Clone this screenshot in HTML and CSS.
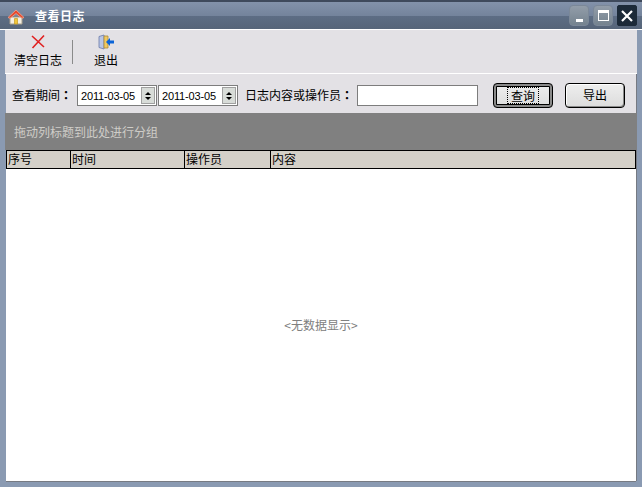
FILE: index.html
```html
<!DOCTYPE html>
<html lang="zh">
<head>
<meta charset="utf-8">
<title>查看日志</title>
<link rel="stylesheet" href="styles.css">
</head>
<body>
<div class="window">
  <header class="titlebar">
    <svg class="home" width="18" height="18" viewBox="0 0 18 18">
      <path d="M3 9v7h12V9z" fill="#f4efe2" stroke="#a89f8c"/>
      <path d="M7.500 10.500h3V16h-3z" fill="#f2c73a" stroke="#c59b20" stroke-width=".7"/>
      <path d="M1 9.500 9 2l8 7.500-2 .8-6-4.800-6 4.800z" fill="#e8492c" stroke="#f4a48c" stroke-width=".8"/>
    </svg>
    <span class="title">查看日志</span>
    <div class="win-buttons">
      <div class="win-btn"><span class="glyph-min"></span></div>
      <div class="win-btn"><span class="glyph-max"></span></div>
      <div class="win-btn win-close">
        <svg width="16" height="16" viewBox="0 0 16 16"><path d="M3 3l10 10M13 3 3 13" stroke="#fff" stroke-width="2.200"/></svg>
      </div>
    </div>
  </header>
  <div class="body">
    <div class="toolbar">
      <div class="tool tool-clear">
        <svg width="16" height="16" viewBox="0 0 16 16"><path d="M2 2l12 11M14 1.500 2.500 14" stroke="#e02020" stroke-width="1.600"/></svg>
        <span>清空日志</span>
      </div>
      <div class="tool-sep"></div>
      <div class="tool tool-exit">
        <svg width="18" height="16" viewBox="0 0 18 16">
          <path d="M2 2.500 7 1v14l-5-1.500z" fill="#b9c6e6" stroke="#6a7aa8" stroke-width=".8"/>
          <path d="M7 2h4v12H7z" fill="#f0c860" stroke="#a88a3a" stroke-width=".8"/>
          <path d="M17 6.500h-4V4l-4 4 4 4V9.500h4z" fill="#0a64d8"/>
        </svg>
        <span>退出</span>
      </div>
    </div>
    <div class="filter">
      <label class="lbl lbl-period">查看期间<span class="colon" lang="zh-TW">：</span></label>
      <div class="date"><span class="date-val">2011-03-05</span><span class="spin"><i class="up"></i><i class="down"></i></span></div>
      <div class="date date-2"><span class="date-val">2011-03-05</span><span class="spin"><i class="up"></i><i class="down"></i></span></div>
      <label class="lbl lbl-search">日志内容或操作员<span class="colon" lang="zh-TW">：</span></label>
      <input class="search" type="text">
      <button class="btn btn-default" type="button"><span class="focus">查询</span></button>
      <button class="btn btn-export" type="button"><span class="btn-text">导出</span></button>
    </div>
    <div class="groupbar">拖动列标题到此处进行分组</div>
    <div class="grid-head">
      <div class="col col-1">序号</div>
      <div class="col col-2">时间</div>
      <div class="col col-3">操作员</div>
      <div class="col col-4">内容</div>
    </div>
    <div class="grid-body">&lt;无数据显示&gt;</div>
  </div>
</div>
</body>
</html>
```
FILE: styles.css
```css
* { box-sizing: border-box; }
html, body { margin: 0; padding: 0; }
body {
  width: 642px;
  height: 487px;
  overflow: hidden;
  font-family: "Noto Sans CJK SC", "Liberation Sans", sans-serif;
  font-size: 12px;
  color: #000;
}
.window {
  width: 642px;
  height: 487px;
  display: flex;
  flex-direction: column;
  background: #8a9ab2;
}
.titlebar {
  height: 30px;
  flex: none;
  display: flex;
  align-items: center;
  padding: 2px 5px 0 7px;
  border-top: 2px solid #3f4a5c;
  border-bottom: 1px solid #fff;
  background: linear-gradient(#8392aa 0, #74849c 50%, #5d6d84 52%, #566579 100%);
}
.home { flex: none; margin-right: 10px; }
.title { color: #fff; font-weight: 700; font-size: 12px; letter-spacing: 0.5px; margin-top: -2px; }
.win-buttons { margin-left: auto; display: flex; gap: 4px; align-items: center; margin-top: -2px; }
.win-btn {
  width: 20px;
  height: 21px;
  border-radius: 4px;
  background: linear-gradient(#929da9, #75838f);
  border: 1px solid #7b8898;
  display: flex;
  align-items: center;
  justify-content: center;
  position: relative;
}
.glyph-min { width: 7px; height: 3px; background: #fff; margin-top: 9px; }
.glyph-max { width: 11px; height: 11px; border: 1px solid #fff; border-top-width: 3px; }
.win-close { background: #1c2a38; border-color: #1c2a38; border-radius: 2px; }
.body {
  flex: 1;
  display: flex;
  flex-direction: column;
  margin: 0 6px 6px 6px;
  background: #fff;
  box-shadow: 0 1px 0 #767a82, 1px 0 0 #767a82;
  min-height: 0;
}
.toolbar {
  height: 44px;
  flex: none;
  margin-left: -1px;
  margin-right: -1px;
  display: flex;
  align-items: stretch;
  background: #e3e1e5;
  border-bottom: 1px solid #fff;
  padding-left: 9px;
}
.tool { display: flex; flex-direction: column; align-items: center; padding-top: 4px; line-height: 14px; }
.tool span { margin-top: 3px; }
.tool-clear { width: 48px; }
.tool-exit { width: 24px; margin-left: 21px; }
.tool-sep { width: 1px; height: 24px; background: #8a8a8a; margin: 10px 0 0 10px; }
.filter {
  height: 39px;
  flex: none;
  display: flex;
  align-items: center;
  background: #e3e1e5;
  padding: 4px 0 0 6px;
}
.lbl { white-space: nowrap; line-height: 14px; margin-bottom: 1px; }
.colon { font-family: "Noto Sans CJK TC", sans-serif; font-weight: 700; }
.date {
  width: 80px;
  height: 21px;
  margin-left: 5px;
  background: #fff;
  border: 1px solid #7d7d7d;
  display: flex;
  align-items: center;
  justify-content: space-between;
  padding: 0 1px 0 3px;
}
.date-2 { margin-left: 1px; }
.date-val { font-family: "Liberation Sans", sans-serif; font-size: 11px; letter-spacing: -0.15px; }
.spin {
  width: 14px;
  height: 17px;
  background: #d8dcd8;
  border: 1px solid #a0a0a0;
  display: flex;
  flex-direction: column;
  align-items: center;
  justify-content: center;
  gap: 2px;
}
.spin i { display: block; width: 0; height: 0; border-left: 3px solid transparent; border-right: 3px solid transparent; }
.spin .up { border-bottom: 3px solid #000; }
.spin .down { border-top: 3px solid #000; }
.lbl-search { margin-left: 7px; }
.search {
  width: 121px;
  height: 21px;
  margin: 0 0 0 4px;
  padding: 0;
  background: #fff;
  border: 1px solid #7d7d7d;
  border-radius: 0;
  outline: none;
}
.btn {
  width: 60px;
  height: 25px;
  padding: 0;
  font: inherit;
  color: #000;
  background: linear-gradient(#eeeeee, #dcdcdc);
  border: 1px solid #000;
  border-radius: 4px;
  box-shadow: inset -1px -1px 0 #8a8a8a, inset 1px 1px 0 #fff;
  display: flex;
  align-items: center;
  justify-content: center;
}
.btn-default {
  margin-left: 15px;
  border: 1px solid #000;
  box-shadow: inset 0 0 0 2px #8a8a8a, inset 0 0 0 3px #000;
}
.focus { outline: 1px dotted #000; padding: 0 3px; line-height: 15px; margin-bottom: 1px; }
.btn-text { line-height: 15px; margin-bottom: 2px; }
.btn-export { margin-left: 12px; }
.groupbar {
  height: 37px;
  flex: none;
  margin: 0 -1px;
  background: #808080;
  color: #cfcdc8;
  padding: 11px 0 0 9px;
  line-height: 16px;
}
.grid-head {
  height: 19px;
  flex: none;
  display: flex;
  background: #d4d0c8;
  border: 1px solid #000;
  line-height: 16px;
}
.col { border-right: 1px solid #000; padding-left: 1px; }
.col-1 { width: 64px; }
.col-2 { width: 114px; }
.col-3 { width: 86px; }
.col-4 { flex: 1; border-right: 0; }
.grid-body {
  flex: 1;
  display: flex;
  align-items: center;
  justify-content: center;
  color: #808080;
  background: #fff;
  padding-bottom: 2px;
}
```
